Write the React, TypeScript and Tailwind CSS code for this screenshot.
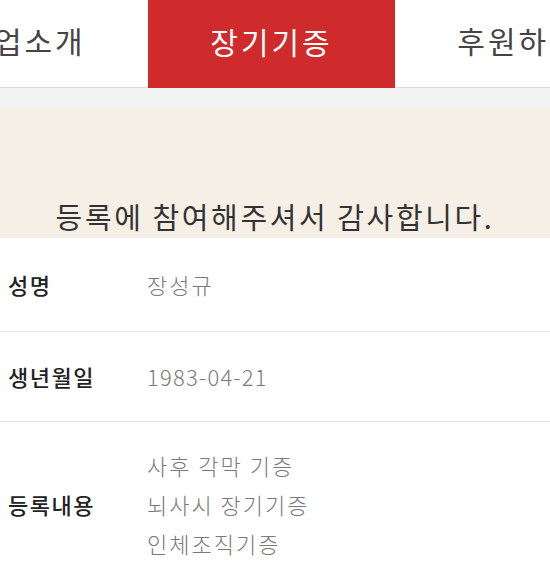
const TABS = ["기업소개", "장기기증", "후원하기", "소식"];

const ROWS = [
  { label: "성명", values: ["장성규"], h: "h-[94px]" },
  { label: "생년월일", values: ["1983-04-21"], h: "h-[90px]" },
  { label: "등록내용", values: ["사후 각막 기증", "뇌사시 장기기증", "인체조직기증"], h: "h-[164px]" },
];

export default function App() {
  return (
    <div className="w-[550px] h-[571px] overflow-hidden bg-white font-['Noto_Sans_CJK_KR','Noto_Sans',sans-serif]">
      {/* Tab bar */}
      <div className="flex h-[88px] border-b border-[#dcdcdc] whitespace-nowrap ml-[-99px]">
        {TABS.map((tab) => (
          <div
            key={tab}
            className={`flex items-center justify-center w-[247px] pb-[6px] text-[30px] tracking-[3px] shrink-0 ${
              tab === "장기기증" ? "bg-[#cf2a2c] text-white h-[88px]" : "text-[#444]"
            }`}
          >
            {tab}
          </div>
        ))}
      </div>

      {/* Thanks banner */}
      <div className="h-[20px] bg-[#f3f3f3]" />
      <div className="h-[130px] bg-[#f6efe6] flex items-end justify-center pb-[2px]">
        <p className="text-[29px] text-[#333] leading-[40px] tracking-[2.6px]">등록에 참여해주셔서 감사합니다.</p>
      </div>

      {/* Info rows */}
      <div>
        {ROWS.map((row, i) => (
          <div
            key={row.label}
            className={`flex items-center ${row.h} ${i < ROWS.length - 1 ? "border-b border-[#e4e4e4]" : ""}`}
          >
            <div className="w-[147px] pl-[8px] text-[22px] font-medium tracking-[1.5px] text-[#222]">{row.label}</div>
            <div className="flex flex-col text-[22px] font-light tracking-[2px] text-[#7a7a7a] leading-[39px]">
              {row.values.map((v) => (
                <span key={v} className={v.startsWith("19") ? "tracking-[1.2px]" : ""}>
                  {v}
                </span>
              ))}
            </div>
          </div>
        ))}
      </div>
    </div>
  );
}
